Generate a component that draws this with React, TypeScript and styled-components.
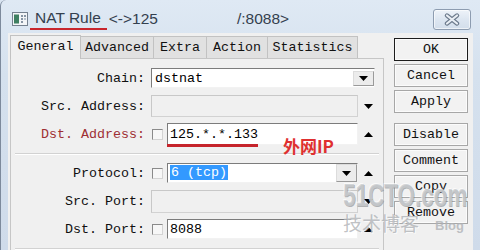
import React from 'react';
import styled, { createGlobalStyle } from 'styled-components';

const mono = `"Liberation Mono", "DejaVu Sans Mono", monospace`;

const GlobalStyle = createGlobalStyle`
  html, body {
    margin: 0;
    padding: 0;
    background: #d9e4f1;
  }
  * {
    box-sizing: border-box;
  }
`;

const Window = styled.div`
  position: relative;
  width: 480px;
  height: 250px;
  overflow: hidden;
  display: flex;
  flex-direction: column;
  background: linear-gradient(180deg, #dfe9f4 0%, #d5e1ee 30%, #cfdbea 100%);
  border-left: 1px solid #7d8a9c;
  border-top-left-radius: 6px;
`;

const TitleBar = styled.div`
  height: 33px;
  flex: none;
  display: flex;
  align-items: center;
  padding: 5px 9px 0 11px;
  font-family: "Liberation Sans", Arial, sans-serif;
  font-size: 15.5px;
  color: #34404e;
  white-space: nowrap;
`;

const AppIcon = styled.svg`
  width: 16px;
  height: 14px;
  flex: none;
  margin-right: 2px;
`;

const TitleMain = styled.span`
  padding: 0 6px 1px 5px;
  border-bottom: 2px solid #c8262d;
  line-height: 18px;
`;

const TitlePart = styled.span<{ $gap: number }>`
  margin-left: ${(p) => p.$gap}px;
  line-height: 18px;
`;

const CloseButton = styled.div`
  margin-left: auto;
  width: 38px;
  height: 21px;
  border: 1px solid #8d9cb0;
  border-radius: 3px;
  background: linear-gradient(180deg, #eef3f9 0%, #dde6f1 50%, #d3deeb 100%);
  display: flex;
  align-items: center;
  justify-content: center;
  box-shadow: inset 0 0 0 1px rgba(255, 255, 255, 0.6);
`;

const Body = styled.div`
  flex: 1;
  min-height: 0;
  margin: 0 7px;
  background: #f0f0f0;
  display: flex;
  gap: 10px;
  padding: 2px 5px 0 2px;
`;

const LeftCol = styled.div`
  width: 374px;
  flex: none;
  display: flex;
  flex-direction: column;
`;

const TabRow = styled.div`
  height: 23px;
  flex: none;
  display: flex;
  align-items: flex-end;
`;

const Tab = styled.div<{ $w: number; $active?: boolean }>`
  width: ${(p) => p.$w}px;
  height: ${(p) => (p.$active ? 24 : 22)}px;
  margin-bottom: ${(p) => (p.$active ? -1 : 0)}px;
  margin-right: -1px;
  position: relative;
  z-index: ${(p) => (p.$active ? 2 : 1)};
  border: 1px solid #c2c2c2;
  border-bottom: none;
  background: ${(p) => (p.$active ? '#f0f0f0' : '#e1e1e1')};
  font-family: ${mono};
  font-size: 13.33px;
  color: #111;
  display: flex;
  align-items: center;
  justify-content: center;
  padding-bottom: ${(p) => (p.$active ? 2 : 0)}px;
`;

const Panel = styled.div`
  flex: 1;
  min-height: 0;
  border: 1px solid #c6c6c6;
  border-bottom: none;
  background: #f0f0f0;
  padding-top: 5px;
  position: relative;
`;

const Row = styled.div`
  height: 28px;
  display: grid;
  grid-template-columns: 134px 224px;
  column-gap: 6px;
  align-items: center;
`;

const Label = styled.div<{ $red?: boolean }>`
  text-align: right;
  font-family: ${mono};
  font-size: 13.33px;
  color: ${(p) => (p.$red ? '#9e2f33' : '#111')};
  white-space: nowrap;
`;

const Field = styled.div`
  display: flex;
  align-items: center;
  height: 100%;
`;

const Check = styled.div`
  width: 11px;
  height: 11px;
  flex: none;
  margin: 0 4px 0 1px;
  background: #f7f7f7;
  border: 1px solid #8a8a8a;
  border-right-color: #d4d4d4;
  border-bottom-color: #d4d4d4;
`;

const TextBox = styled.div<{ $h: number; $disabled?: boolean }>`
  position: relative;
  flex: 1;
  height: ${(p) => p.$h}px;
  display: flex;
  align-items: center;
  padding-left: 2px;
  background: ${(p) => (p.$disabled ? '#f0f0f0' : '#ffffff')};
  border: 1px solid ${(p) => (p.$disabled ? '#d2d2d2' : '#f2f2f2')};
  border-top-color: ${(p) => (p.$disabled ? '#c8c8c8' : '#7c7c7c')};
  border-left-color: ${(p) => (p.$disabled ? '#c8c8c8' : '#7c7c7c')};
  font-family: ${mono};
  font-size: 13.33px;
  color: #000;
  white-space: nowrap;
`;

const Value = styled.span`
  flex: 1;
`;

const Selected = styled.span`
  background: #3399ff;
  color: #fff;
  padding: 0 1px;
  line-height: 18px;
`;

const DropButton = styled.div<{ $inset?: boolean }>`
  width: 21px;
  align-self: stretch;
  margin: ${(p) => (p.$inset ? '2px 0 1px 0' : '0')};
  border: 1px solid #9a9a9a;
  border-top-color: #dcdcdc;
  border-left-color: #dcdcdc;
  background: #ececec;
  display: flex;
  align-items: center;
  justify-content: center;
`;

const ArrowSlot = styled.div`
  width: 17px;
  flex: none;
  display: flex;
  align-items: center;
  justify-content: center;
  padding-left: 3px;
`;

const Underline = styled.div`
  position: absolute;
  left: -1px;
  bottom: -3px;
  width: 91px;
  height: 3px;
  background: #c6242b;
`;

const Separator = styled.div<{ $after?: number }>`
  height: 2px;
  margin: 5px 4px ${(p) => p.$after ?? 4}px;
  border-top: 1px solid #d2d2d2;
  border-bottom: 1px solid #ffffff;
`;

const RightCol = styled.div`
  width: 74px;
  flex: none;
  display: flex;
  flex-direction: column;
  padding-top: 3px;
`;

const Button = styled.div<{ $primary?: boolean; $spaced?: boolean }>`
  height: 23px;
  margin-bottom: 3px;
  margin-top: ${(p) => (p.$spaced ? 7 : 0)}px;
  border: 1px solid ${(p) => (p.$primary ? '#1c1c1c' : '#a7a7a7')};
  background: #f2f2f2;
  box-shadow: inset 0 0 0 1px #fbfbfb;
  display: flex;
  align-items: center;
  justify-content: center;
  font-family: ${mono};
  font-size: 13.33px;
  color: #111;
`;

const Note = styled.div`
  position: absolute;
  left: 282px;
  top: 136px;
  font-family: "Noto Sans CJK SC", "Liberation Sans", sans-serif;
  font-weight: bold;
  font-size: 17px;
  line-height: 19px;
  color: #df3030;
  white-space: nowrap;
`;

const Watermark = styled.div`
  position: absolute;
  left: 342px;
  top: 179px;
  pointer-events: none;
  color: rgba(200, 203, 206, 0.8);
`;

const WatermarkBig = styled.div`
  font-family: "Liberation Sans", Arial, sans-serif;
  font-weight: bold;
  font-size: 32px;
  line-height: 32px;
  transform: scaleX(0.7);
  transform-origin: left top;
  white-space: nowrap;
  text-shadow: 1px 1px 0 rgba(120, 124, 128, 0.55), -1px -1px 0 rgba(255, 255, 255, 0.7);
`;

const WatermarkLine = styled.div`
  display: flex;
  align-items: flex-end;
  gap: 16px;
  white-space: nowrap;
`;

const WatermarkCjk = styled.span`
  font-family: "Noto Sans CJK SC", sans-serif;
  font-size: 19px;
  line-height: 24px;
  color: rgba(175, 178, 182, 0.8);
  text-shadow: 1px 1px 0 rgba(255, 255, 255, 0.7);
`;

const WatermarkBlog = styled.span`
  font-family: "Liberation Sans", Arial, sans-serif;
  font-weight: bold;
  font-size: 13px;
  line-height: 18px;
  color: rgba(175, 178, 182, 0.8);
`;

function Arrow({ up }: { up?: boolean }) {
  return (
    <svg width="9" height="5" viewBox="0 0 9 5">
      <polygon points={up ? '0,5 9,5 4.5,0' : '0,0 9,0 4.5,5'} fill="#000" />
    </svg>
  );
}

const tabs = [
  { name: 'General', w: 71 },
  { name: 'Advanced', w: 74 },
  { name: 'Extra', w: 54 },
  { name: 'Action', w: 62 },
  { name: 'Statistics', w: 91 },
];

const buttons = ['OK', 'Cancel', 'Apply', 'Disable', 'Comment', 'Copy', 'Remove'];

export default function App() {
  return (
    <>
      <GlobalStyle />
      <Window>
        <TitleBar>
          <AppIcon viewBox="0 0 16 14">
            <rect x="0.5" y="0.5" width="15" height="13" fill="#f3f5f7" stroke="#75818f" />
            <rect x="2" y="2.5" width="5" height="9" fill="#3f7f61" />
            <rect x="9" y="3" width="2" height="2" fill="#8795a4" />
            <rect x="12" y="3" width="2" height="2" fill="#8795a4" />
            <rect x="9" y="6" width="2" height="2" fill="#8795a4" />
            <rect x="12" y="6" width="2" height="2" fill="#b5c0cb" />
            <rect x="9" y="9" width="2" height="2" fill="#8795a4" />
          </AppIcon>
          <TitleMain>NAT Rule</TitleMain>
          <TitlePart $gap={2}>&lt;-&gt;125</TitlePart>
          <TitlePart $gap={79}>/:8088&gt;</TitlePart>
          <CloseButton>
            <svg width="16" height="13" viewBox="0 0 16 13">
              <path d="M3 2.5 L13 10.5 M13 2.5 L3 10.5" stroke="#6c7a8c" strokeWidth="4.4" strokeLinecap="round" />
              <path d="M3 2.5 L13 10.5 M13 2.5 L3 10.5" stroke="#e9eef4" strokeWidth="2.2" strokeLinecap="round" />
            </svg>
          </CloseButton>
        </TitleBar>
        <Body>
          <LeftCol>
            <TabRow>
              {tabs.map((t, i) => (
                <Tab key={t.name} $w={t.w} $active={i === 0}>
                  {t.name}
                </Tab>
              ))}
            </TabRow>
            <Panel>
              <Row>
                <Label>Chain:</Label>
                <Field>
                  <TextBox $h={20}>
                    <Value style={{ paddingLeft: 1 }}>dstnat</Value>
                    <DropButton $inset>
                      <Arrow />
                    </DropButton>
                  </TextBox>
                </Field>
              </Row>
              <Row>
                <Label>Src. Address:</Label>
                <Field>
                  <TextBox $h={22} $disabled />
                  <ArrowSlot>
                    <Arrow />
                  </ArrowSlot>
                </Field>
              </Row>
              <Row>
                <Label $red>Dst. Address:</Label>
                <Field>
                  <Check />
                  <TextBox $h={22}>
                    <Value>125.*.*.133</Value>
                    <Underline />
                  </TextBox>
                  <ArrowSlot>
                    <Arrow up />
                  </ArrowSlot>
                </Field>
              </Row>
              <Separator />
              <Row>
                <Label>Protocol:</Label>
                <Field>
                  <Check />
                  <TextBox $h={20}>
                    <Value>
                      <Selected>6 (tcp)</Selected>
                    </Value>
                    <DropButton>
                      <Arrow />
                    </DropButton>
                  </TextBox>
                  <ArrowSlot>
                    <Arrow up />
                  </ArrowSlot>
                </Field>
              </Row>
              <Row>
                <Label>Src. Port:</Label>
                <Field>
                  <TextBox $h={23} $disabled />
                  <ArrowSlot>
                    <Arrow />
                  </ArrowSlot>
                </Field>
              </Row>
              <Row>
                <Label>Dst. Port:</Label>
                <Field>
                  <Check />
                  <TextBox $h={20}>
                    <Value>8088</Value>
                  </TextBox>
                  <ArrowSlot>
                    <Arrow up />
                  </ArrowSlot>
                </Field>
              </Row>
              <Separator />
            </Panel>
          </LeftCol>
          <RightCol>
            {buttons.map((b) => (
              <Button key={b} $primary={b === 'OK'} $spaced={b === 'Disable'}>
                {b}
              </Button>
            ))}
          </RightCol>
        </Body>
        <Note>外网IP</Note>
        <Watermark>
          <WatermarkBig>51CTO.com</WatermarkBig>
          <WatermarkLine>
            <WatermarkCjk>技术博客</WatermarkCjk>
            <WatermarkBlog>Blog</WatermarkBlog>
          </WatermarkLine>
        </Watermark>
      </Window>
    </>
  );
}
